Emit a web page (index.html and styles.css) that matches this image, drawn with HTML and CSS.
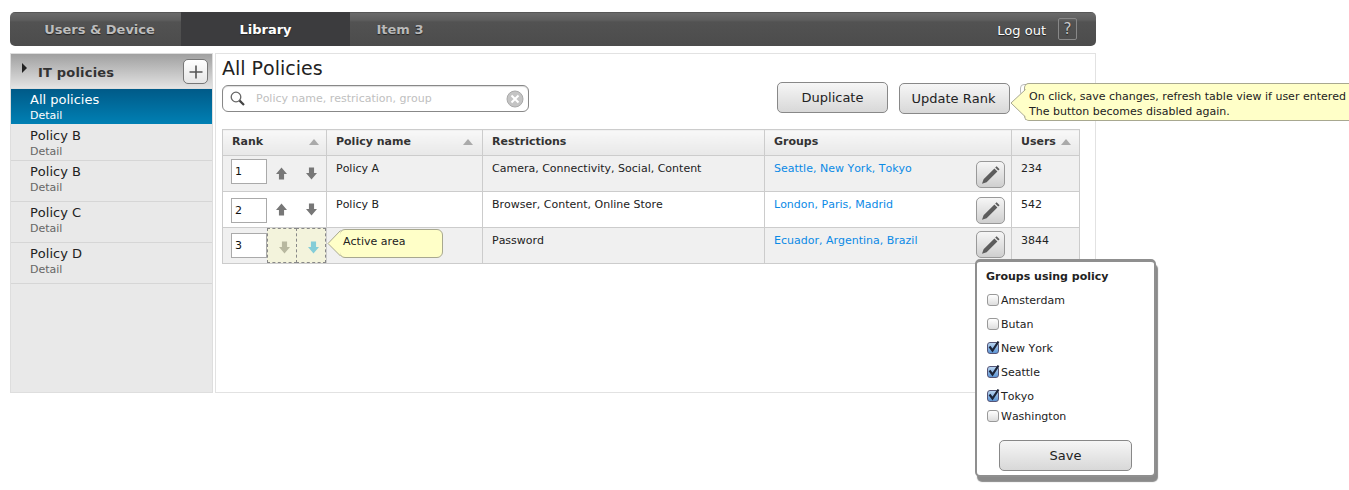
FILE: index.html
```html
<!DOCTYPE html>
<html lang="en">
<head>
<meta charset="utf-8">
<title>All Policies</title>
<link rel="stylesheet" href="styles.css">
</head>
<body>
<svg class="defs" width="0" height="0">
  <symbol id="up" viewBox="0 0 12 14"><path d="M6 0.5 12 7.5H8.8V13.5H3.2V7.5H0Z"/></symbol>
  <symbol id="down" viewBox="0 0 12 14"><path d="M6 13.5 12 6.5H8.8V0.5H3.2V6.5H0Z"/></symbol>
  <symbol id="pencil" viewBox="0 0 20 20"><path d="M15.6 1.2 18.6 4.2 17.2 5.6 14.2 2.6ZM13.4 3.4 16.4 6.4 5.6 17.2 1 18.8 2.6 14.2Z"/></symbol>
</svg>
<div class="app">
  <nav class="topbar">
    <a class="tab tab-users">Users &amp; Device</a>
    <a class="tab tab-active">Library</a>
    <a class="tab tab-item">Item 3</a>
    <div class="top-right">
      <span class="logout">Log out</span>
      <span class="help">?</span>
    </div>
  </nav>
  <div class="columns">
    <aside class="sidebar">
      <div class="side-head">
        <span class="caret"></span>
        <span class="side-title">IT policies</span>
        <button class="plus"><svg width="14" height="14" viewBox="0 0 14 14"><path d="M7 0.5V13.5M0.5 7H13.5" stroke="#555" stroke-width="1.6"/></svg></button>
      </div>
      <div class="side-item side-active"><div class="si-name">All policies</div><div class="si-detail">Detail</div></div>
      <div class="side-item side-first"><div class="si-name">Policy B</div><div class="si-detail">Detail</div></div>
      <div class="side-item"><div class="si-name">Policy B</div><div class="si-detail">Detail</div></div>
      <div class="side-item"><div class="si-name">Policy C</div><div class="si-detail">Detail</div></div>
      <div class="side-item"><div class="si-name">Policy D</div><div class="si-detail">Detail</div></div>
    </aside>
    <main class="main">
      <h1 class="title">All Policies</h1>
      <div class="toolbar">
        <div class="search">
          <svg class="mag" width="15" height="15" viewBox="0 0 15 15"><circle cx="6" cy="6" r="4.8" fill="none" stroke="#666" stroke-width="1.3"/><path d="M9.6 9.6 14 14" stroke="#444" stroke-width="2.2"/></svg>
          <span class="ph">Policy name, restrication, group</span>
          <svg class="clear" width="18" height="18" viewBox="0 0 18 18"><circle cx="9" cy="9" r="8" fill="#c4c4c4" stroke="#aaa"/><path d="M5.5 5.5 12.5 12.5M12.5 5.5 5.5 12.5" stroke="#fff" stroke-width="2"/></svg>
        </div>
        <button class="btn btn-dup">Duplicate</button>
        <button class="btn btn-upd">Update Rank</button>
      </div>
      <table class="grid">
        <colgroup><col class="c1"><col class="c2"><col class="c3"><col class="c4"><col class="c5"></colgroup>
        <thead>
          <tr>
            <th><div class="th-in th-rank"><span>Rank</span><i class="sort"></i></div></th>
            <th><div class="th-in"><span>Policy name</span><i class="sort"></i></div></th>
            <th>Restrictions</th>
            <th>Groups</th>
            <th><div class="th-in th-users"><span>Users</span><i class="sort"></i></div></th>
          </tr>
        </thead>
        <tbody>
          <tr class="odd">
            <td class="rank"><div class="rank-in"><span class="num n1">1</span><svg class="arr arr-a"><use href="#up"/></svg><svg class="arr arr-b"><use href="#down"/></svg></div></td>
            <td>Policy A</td>
            <td>Camera, Connectivity, Social, Content</td>
            <td class="grp"><a>Seattle, New York, Tokyo</a><button class="edit"><svg width="20" height="20"><use href="#pencil"/></svg></button></td>
            <td>234</td>
          </tr>
          <tr>
            <td class="rank"><div class="rank-in"><span class="num n2">2</span><svg class="arr arr-a"><use href="#up"/></svg><svg class="arr arr-b"><use href="#down"/></svg></div></td>
            <td>Policy B</td>
            <td>Browser, Content, Online Store</td>
            <td class="grp"><a>London, Paris, Madrid</a><button class="edit"><svg width="20" height="20"><use href="#pencil"/></svg></button></td>
            <td>542</td>
          </tr>
          <tr class="odd">
            <td class="rank"><div class="rank-in rank-last"><span class="num n3">3</span><span class="hot"><svg class="arr"><use href="#down"/></svg></span><span class="hot hot2"><svg class="arr"><use href="#down"/></svg></span></div></td>
            <td></td>
            <td>Password</td>
            <td class="grp"><a>Ecuador, Argentina, Brazil</a><button class="edit edit-last"><svg width="20" height="20"><use href="#pencil"/></svg></button></td>
            <td>3844</td>
          </tr>
        </tbody>
      </table>
    </main>
  </div>
  <div class="peek"></div>
  <div class="tip tip-rank"><svg class="tail" width="16" height="29" viewBox="0 0 16 29"><path d="M15.5 0.5 1 14 15.5 28" fill="#ffffc8" stroke="#a8a890"/></svg>On click, save changes, refresh table view if user entered<br>The button becomes disabled again.</div>
  <div class="tip tip-active"><svg class="tail" width="14" height="27" viewBox="0 0 14 27"><path d="M13.5 0.5 1 13.5 13.5 26" fill="#ffffc8" stroke="#a8a890"/></svg>Active area</div>
  <section class="pop">
    <h2 class="pop-title">Groups using policy</h2>
    <label class="opt o1"><span class="cb"></span>Amsterdam</label>
    <label class="opt o2"><span class="cb"></span>Butan</label>
    <label class="opt o2"><span class="cb on"><svg width="14" height="14" viewBox="0 0 14 14"><path d="M2.5 6.5 5.5 10.5 11.5 1.5" fill="none" stroke="#1c2438" stroke-width="2.2"/></svg></span>New York</label>
    <label class="opt o2"><span class="cb on"><svg width="14" height="14" viewBox="0 0 14 14"><path d="M2.5 6.5 5.5 10.5 11.5 1.5" fill="none" stroke="#1c2438" stroke-width="2.2"/></svg></span>Seattle</label>
    <label class="opt o2"><span class="cb on"><svg width="14" height="14" viewBox="0 0 14 14"><path d="M2.5 6.5 5.5 10.5 11.5 1.5" fill="none" stroke="#1c2438" stroke-width="2.2"/></svg></span>Tokyo</label>
    <label class="opt o3"><span class="cb"></span>Washington</label>
    <button class="btn btn-save">Save</button>
  </section>
</div>
</body>
</html>
```
FILE: styles.css
```css
* { box-sizing: border-box; }
html, body { margin: 0; height: 490px; overflow: hidden; background: #fff; }
body { font-family: "DejaVu Sans", Verdana, sans-serif; font-size: 11px; color: #222; font-kerning: none; }
button { font-family: inherit; font-kerning: none; margin: 0; padding: 0; }
.defs { position: absolute; }
.app { position: relative; width: 1349px; height: 490px; padding: 12px 253px 0 10px; overflow: hidden; }

.topbar { display: flex; height: 34px; border-radius: 5px; overflow: hidden; background: linear-gradient(#444 0, #6a6a6a 1px, #5e5e5e 8px, #525252 10px, #4c4c4c 100%); color: #b9b9b9; font-weight: bold; font-size: 13px; text-shadow: 0 1px 1px #222; }
.tab { display: flex; align-items: center; justify-content: center; }
.tab-users { width: 171px; padding-left: 8px; color: #bdbdbd; }
.tab-active { width: 169px; background: #3c3c3e; color: #fff; }
.tab-item { width: 148px; padding-right: 48px; }
.top-right { margin-left: auto; display: flex; align-items: center; gap: 12px; padding: 2px 19px 0 0; font-weight: normal; font-size: 13px; color: #fff; }
.help { width: 19px; height: 22px; margin-top: -2px; border: 1px solid #888; border-radius: 2px; display: flex; align-items: center; justify-content: center; color: #c8c8c8; font-size: 15px; font-weight: normal; }

.columns { display: flex; gap: 2px; margin-top: 7px; height: 340px; }
.sidebar { width: 203px; background: #e9e9e9; border: 1px solid #dedede; }
.side-head { position: relative; height: 35px; display: flex; align-items: center; background: linear-gradient(#a0a0a0, #dcdcdc 90%, #e4e4e4); border-bottom: 1px solid #ddd; padding-left: 27px; }
.caret { position: absolute; left: 11px; top: 9px; border-left: 5px solid #222; border-top: 5px solid transparent; border-bottom: 5px solid transparent; }
.side-title { font-weight: bold; font-size: 13px; letter-spacing: 0.2px; color: #333; padding-top: 2px; }
.plus { position: absolute; right: 4px; top: 5px; width: 25px; height: 25px; border: 1px solid #777; border-radius: 5px; background: linear-gradient(#fff, #e6e6e6); display: flex; align-items: center; justify-content: center; }
.side-item { height: 41px; padding: 3px 0 0 19px; border-bottom: 1px solid #d6d6d6; }
.si-name { font-size: 13px; color: #222; line-height: 16px; }
.si-detail { font-size: 11px; color: #666; line-height: 14px; margin-top: 1px; }
.side-item.side-active { height: 35px; padding-top: 3px; background: linear-gradient(#005a88, #0080b4); border-bottom: 0; }
.side-active .si-name, .side-active .si-detail { color: #fff; }
.side-item.side-first { height: 37px; padding-top: 4px; }

.main { width: 881px; border: 1px solid #e2e2e2; padding: 0 0 0 6px; }
.title { margin: 0; font-size: 19px; font-weight: normal; line-height: 26px; height: 31px; padding-top: 1px; color: #222; }
.toolbar { display: flex; align-items: flex-start; height: 44px; margin-top: -3px; }
.search { width: 307px; height: 27px; margin-top: 3px; border: 1px solid #888; border-radius: 6px; background: #fff; display: flex; align-items: center; padding: 0 4px 0 7px; box-shadow: inset 0 1px 1px #ddd; }
.mag { flex: none; }
.ph { color: #c0c0c0; font-size: 11px; margin-left: 11px; flex: 1; }
.clear { flex: none; }
.btn { border: 1px solid #888; border-radius: 5px; background: linear-gradient(#f6f6f6, #d8d8d8); color: #222; font-size: 13px; }
.btn-dup { width: 111px; height: 31px; margin-left: 248px; }
.btn-upd { width: 111px; height: 31px; margin: 1px 0 0 11px; padding-right: 2px; }

.grid { border-collapse: collapse; table-layout: fixed; width: 857px; margin-top: 3px; }
.c1 { width: 104px; } .c2 { width: 156px; } .c3 { width: 282px; } .c4 { width: 247px; } .c5 { width: 68px; }
.grid th, .grid td { border: 1px solid #ccc; padding: 0 9px; }
.grid th { height: 26px; padding-bottom: 2px; text-align: left; font-size: 11px; font-weight: bold; background: linear-gradient(#f8f8f8, #e8e8e8); color: #333; }
.grid td { height: 36px; vertical-align: top; padding-top: 6px; line-height: 14px; }
.odd td { background: #f0f0f0; }
.th-in { display: flex; justify-content: space-between; align-items: center; }
.th-users { justify-content: flex-start; gap: 5px; }
.sort { border-left: 5px solid transparent; border-right: 5px solid transparent; border-bottom: 6px solid #aaa; }
.th-rank .sort { margin-right: -2px; }
.th-users .sort { margin: 0; }
.grid td.rank { padding: 0; }
.rank-in { display: flex; align-items: center; height: 35px; padding-left: 8px; }
.num { width: 36px; height: 25px; flex: none; align-self: flex-start; border: 1px solid #aaa; background: #fff; display: flex; align-items: center; padding-left: 3px; color: #111; font-size: 11px; }
.n1 { margin-top: 3px; }
.n2 { margin-top: 6px; }
.n3 { margin-top: 5px; }
.arr { width: 11px; height: 13px; fill: #777; display: block; flex: none; }
.arr-a { margin-left: 9px; }
.arr-b { margin-left: 19px; }
.hot { width: 30px; height: 35px; border: 1px dashed #888; background: #f3f3dc; display: flex; align-items: center; justify-content: center; padding-left: 5px; }
.hot + .hot { margin-left: -1px; }
.hot .arr { fill: #b8b8a0; margin-top: 3px; }
.hot2 .arr { fill: #84cdd8; }
.grp { position: relative; }
.grid .grp a { color: #0b8ae6; }
.edit { position: absolute; right: 6px; top: 5px; width: 29px; height: 27px; border: 1px solid #999; border-radius: 5px; background: linear-gradient(#f6f6f6, #cfcfcf); display: flex; align-items: center; justify-content: center; }
.edit svg { fill: #5c5c5c; }
.edit-last { top: 3px; }

.tip { position: absolute; background: #ffffc8; border: 1px solid #a8a890; color: #222; font-size: 11px; }
.tail { position: absolute; overflow: visible; }
.peek { position: absolute; left: 1020px; top: 84px; width: 12px; height: 12px; background: #fff; border: 1px solid #bbb; border-radius: 4px; }
.tip-rank { left: 1024px; top: 83px; width: 340px; height: 38px; padding: 5px 0 0 4px; line-height: 15px; border-radius: 5px 0 0 5px; border-right: 0; white-space: nowrap; }
.tip-rank .tail { left: -15px; top: 5px; }
.tip-active { left: 339px; top: 229px; width: 104px; height: 29px; padding: 5px 0 0 3px; line-height: 14px; border-radius: 6px; }
.tip-active .tail { left: -13px; top: 0; }

.pop { position: absolute; left: 975px; top: 259px; width: 181px; height: 218px; background: #fff; border: 2px solid #8f8f8f; border-top-width: 3px; border-radius: 5px; padding: 7px 0 0 9px; box-shadow: 2px 5px 1px #8a8a8a; }
.pop-title { margin: 0; font-size: 11px; font-weight: bold; color: #222; line-height: 15px; }
.opt { display: flex; align-items: center; height: 16px; color: #222; font-size: 11px; gap: 2px; padding-left: 1px; }
.o1 { margin-top: 8px; }
.o2 { margin-top: 8px; }
.o3 { margin-top: 4px; }
.cb { position: relative; width: 12px; height: 12px; flex: none; border: 1px solid #999; border-radius: 3px; background: linear-gradient(#fff, #ddd); }
.cb.on { background: linear-gradient(#b8d4f0, #5c94d4); border-color: #557; }
.cb svg { position: absolute; left: -1px; top: -3px; }
.btn-save { display: block; width: 133px; height: 31px; margin: 16px 0 0 13px; }
```
